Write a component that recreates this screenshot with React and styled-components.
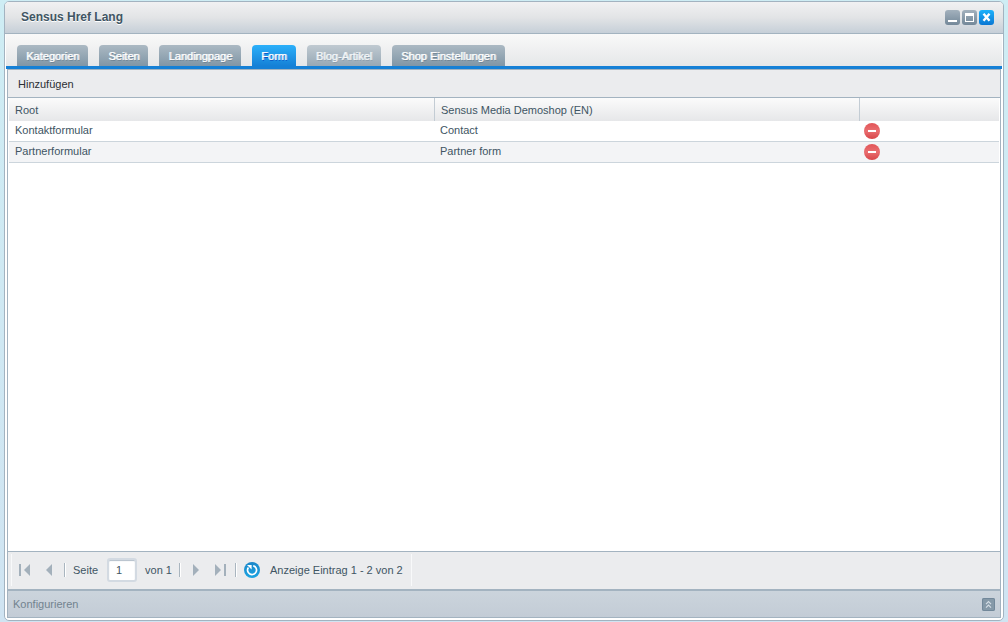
import React, { useState } from "react";
import styled, { createGlobalStyle, css } from "styled-components";

const line = "#a3b3c0";
const ink = "#405563";

const GlobalStyle = createGlobalStyle`
  *, *::before, *::after { box-sizing: border-box; }
  body {
    margin: 0;
    background: linear-gradient(#ceedf4, #d0e4f2);
    font-family: "Liberation Sans", Arial, sans-serif;
    font-size: 11px;
    line-height: 14px;
    color: ${ink};
  }
  button, input { font: inherit; color: inherit; }
  button { padding: 0; border: 0; background: none; cursor: pointer; }
  svg { display: block; }
`;

const Desktop = styled.div`
  display: flex;
  height: 100vh;
  padding: 1px 4px;
`;

const Window = styled.main`
  flex: 1;
  min-width: 0;
  display: flex;
  flex-direction: column;
  border: 1px solid ${line};
  border-radius: 5px;
  background: #fff;
  overflow: hidden;
`;

const TitleBar = styled.header`
  display: flex;
  align-items: center;
  justify-content: space-between;
  height: 32px;
  padding: 0 9px 0 16px;
  border-bottom: 1px solid ${line};
  background: linear-gradient(#f1f1f2, #e2e4e6 50%, #c6cfd8);
`;

const Title = styled.h1`
  margin: 0;
  padding-bottom: 2px;
  font-size: 12px;
  line-height: 16px;
  font-weight: bold;
  text-shadow: 0 1px 0 #fff;
`;

const WindowTools = styled.div`
  display: flex;
  gap: 2px;
`;

const ToolButton = styled.button`
  width: 15px;
  height: 15px;
  border-radius: 3px;
  background: ${(p) =>
    p.$primary
      ? "linear-gradient(#1db2fb, #0a77d3)"
      : "linear-gradient(#a3b1bd, #738899)"};
`;

const TabBar = styled.nav`
  display: flex;
  align-items: flex-end;
  gap: 11px;
  height: 35px;
  margin: 0 1px;
  padding: 0 11px;
  border-bottom: 3px solid #1580d6;
  background: linear-gradient(#f9f9f9, #e5e7e9);
`;

const Tab = styled.button`
  height: 21px;
  padding: 1px 9px 0;
  border-radius: 4px 4px 0 0;
  white-space: nowrap;
  color: #fff;
  text-shadow: 1px 0 0 rgba(255, 255, 255, 0.8), 1px 1px 0 #6f8494;
  background: linear-gradient(#abb9c3, #8096a6);
  ${(p) => p.$muted && css`
    color: #f3f6f8;
    text-shadow: 1px 0 0 rgba(243, 246, 248, 0.8), 1px 1px 0 #8a9cab;
    background: linear-gradient(#c0cad1, #97a8b5);
  `}
  ${(p) => p.$active && css`
    text-shadow: 1px 0 0 rgba(255, 255, 255, 0.8), 1px 1px 0 #0a50c0;
    background: linear-gradient(#2bb0fa, #1580d6);
  `}
`;

const Panel = styled.section`
  flex: 1;
  min-height: 0;
  display: flex;
  flex-direction: column;
  margin: 0 2px 2px;
  border: 1px solid ${line};
`;

const Toolbar = styled.div`
  display: flex;
  align-items: center;
  height: 28px;
  padding: 0 10px;
  border-bottom: 1px solid ${line};
  background: #ebecee;
`;

const AddButton = styled.button`
  color: #2b2f33;
`;

const GridArea = styled.div`
  flex: 1;
  min-height: 0;
  padding: 0 1px;
  overflow: auto;
`;

const Grid = styled.table`
  width: 100%;
  table-layout: fixed;
  border-collapse: separate;
  border-spacing: 0;
`;

const ActionCol = styled.col`
  width: 140px;
`;

const HeadCell = styled.th`
  height: 23px;
  padding: 1px 6px 0;
  text-align: left;
  font-weight: normal;
  background: linear-gradient(#fbfbfb, #e6e7e9);
  & + & {
    border-left: 1px solid #c3ccd4;
  }
`;

const Row = styled.tr`
  background: ${(p) => (p.$striped ? "#f3f4f6" : "#fff")};
`;

const Cell = styled.td`
  height: 21px;
  padding: 0 6px 2px;
  border-bottom: 1px solid #ccd5dc;
`;

const ActionCell = styled(Cell)`
  padding: 0 5px;
`;

const RemoveButton = styled.button`
  display: block;
  width: 16px;
  height: 16px;
`;

const Pager = styled.div`
  display: flex;
  height: 38px;
  border-top: 1px solid ${line};
  background: #ebecee;
`;

const PagerGroup = styled.div`
  display: flex;
  align-items: center;
  margin: 2px 0 3px 3px;
  padding: 0 8px 0 5px;
  border: solid #f8f9fa;
  border-width: 0 1px;
`;

const PagerButton = styled.button`
  display: grid;
  place-items: center;
  width: 16px;
  height: 16px;
  & + & {
    margin-left: 8px;
  }
`;

const Separator = styled.span`
  width: 2px;
  height: 14px;
  margin: 0 7px;
  border-left: 1px solid #a9b5bf;
  border-right: 1px solid #fff;
`;

const PageLabel = styled.label`
  display: flex;
  align-items: center;
`;

const PageInput = styled.input`
  width: 30px;
  height: 24px;
  margin: 0 8px 0 9px;
  padding: 0 7px;
  border: 2px solid #d3dae2;
  border-radius: 3px;
  background: #fff;
  box-shadow: inset 0 1px 1px #b4bfca;
  outline: none;
`;

const Status = styled.span`
  margin-left: 10px;
  white-space: nowrap;
`;

const ConfigBar = styled.footer`
  display: flex;
  align-items: center;
  justify-content: space-between;
  height: 28px;
  padding: 0 5px;
  border-top: 2px solid ${line};
  background: linear-gradient(#cbd4dc, #c3ccd6);
  color: #72838f;
`;

const ExpandButton = styled.button`
  width: 13px;
  height: 13px;
  border-radius: 2px;
  background: #8599a8;
  box-shadow: inset 0 0 0 1px #72889a;
`;

const MinimizeIcon = () => (
  <svg width="15" height="15" viewBox="0 0 15 15" aria-hidden="true">
    <rect x="3" y="10" width="9" height="2" fill="#fff" />
  </svg>
);

const MaximizeIcon = () => (
  <svg width="15" height="15" viewBox="0 0 15 15" aria-hidden="true">
    <path fill="#fff" fillRule="evenodd" d="M3 3h9v9H3zM4 6v5h7V6z" />
  </svg>
);

const CloseIcon = () => (
  <svg width="15" height="15" viewBox="0 0 15 15" aria-hidden="true">
    <path d="M4.5 3.8l6 7M10.5 3.8l-6 7" stroke="#fff" strokeWidth="2.4" />
  </svg>
);

const MinusIcon = () => (
  <svg width="16" height="16" viewBox="0 0 16 16" aria-hidden="true">
    <defs>
      <linearGradient id="minus-fill" x2="0" y2="1">
        <stop offset="0" stopColor="#e25558" />
        <stop offset=".5" stopColor="#e96e70" />
        <stop offset="1" stopColor="#d84548" />
      </linearGradient>
    </defs>
    <circle cx="8" cy="8" r="8" fill="url(#minus-fill)" />
    <rect x="4" y="7" width="8" height="2" fill="#fff" />
  </svg>
);

const PageIcon = ({ forward, edge }) => (
  <svg width="16" height="16" viewBox="0 0 16 16" aria-hidden="true">
    <g fill="#a3b0bb" transform={forward ? "matrix(-1 0 0 1 16 0)" : undefined}>
      {edge && <rect x="2" y="2" width="2" height="12" />}
      <path d={edge ? "M13 2v12L7 8z" : "M11 2v12L5 8z"} />
    </g>
  </svg>
);

const RefreshIcon = () => (
  <svg width="16" height="16" viewBox="0 0 16 16" aria-hidden="true">
    <defs>
      <linearGradient id="refresh-fill" x2="0" y2="1">
        <stop offset="0" stopColor="#1d87c9" />
        <stop offset="1" stopColor="#1ba4e2" />
      </linearGradient>
    </defs>
    <circle cx="8" cy="8" r="8" fill="url(#refresh-fill)" />
    <path d="M9.2 3.7A4.5 4.5 0 1 1 4.4 5.4" fill="none" stroke="#fff" strokeWidth="1.7" />
    <path d="M3 3h4.6v4.6z" fill="#fff" />
  </svg>
);

const ExpandIcon = () => (
  <svg width="13" height="13" viewBox="0 0 13 13" aria-hidden="true">
    <path d="M4 6.2l2.5-2.5L9 6.2M4 9.7l2.5-2.5L9 9.7" fill="none" stroke="#d5dee6" strokeWidth="1.2" />
  </svg>
);

const tabs = [
  { name: "Kategorien" },
  { name: "Seiten" },
  { name: "Landingpage" },
  { name: "Form" },
  { name: "Blog-Artikel", muted: true },
  { name: "Shop Einstellungen" },
];

const forms = [
  { root: "Kontaktformular", shop: "Contact" },
  { root: "Partnerformular", shop: "Partner form" },
];

export default function App() {
  const [active, setActive] = useState("Form");
  const [page, setPage] = useState("1");

  return (
    <>
      <GlobalStyle />
      <Desktop>
        <Window>
          <TitleBar>
            <Title>Sensus Href Lang</Title>
            <WindowTools>
              <ToolButton aria-label="Minimieren"><MinimizeIcon /></ToolButton>
              <ToolButton aria-label="Maximieren"><MaximizeIcon /></ToolButton>
              <ToolButton $primary aria-label="Schließen"><CloseIcon /></ToolButton>
            </WindowTools>
          </TitleBar>
          <TabBar>
            {tabs.map(({ name, muted }) => (
              <Tab
                key={name}
                $muted={muted}
                $active={name === active}
                aria-pressed={name === active}
                onClick={() => setActive(name)}
              >
                {name}
              </Tab>
            ))}
          </TabBar>
          <Panel>
            <Toolbar>
              <AddButton>Hinzufügen</AddButton>
            </Toolbar>
            <GridArea>
              <Grid>
                <colgroup>
                  <col />
                  <col />
                  <ActionCol />
                </colgroup>
                <thead>
                  <tr>
                    <HeadCell>Root</HeadCell>
                    <HeadCell>Sensus Media Demoshop (EN)</HeadCell>
                    <HeadCell aria-label="Aktionen" />
                  </tr>
                </thead>
                <tbody>
                  {forms.map((form, i) => (
                    <Row key={form.root} $striped={i % 2 === 1}>
                      <Cell>{form.root}</Cell>
                      <Cell>{form.shop}</Cell>
                      <ActionCell>
                        <RemoveButton aria-label={`${form.root} löschen`}>
                          <MinusIcon />
                        </RemoveButton>
                      </ActionCell>
                    </Row>
                  ))}
                </tbody>
              </Grid>
            </GridArea>
            <Pager>
              <PagerGroup>
                <PagerButton aria-label="Erste Seite"><PageIcon edge /></PagerButton>
                <PagerButton aria-label="Vorherige Seite"><PageIcon /></PagerButton>
                <Separator />
                <PageLabel>
                  Seite
                  <PageInput value={page} onChange={(e) => setPage(e.target.value)} />
                  von 1
                </PageLabel>
                <Separator />
                <PagerButton aria-label="Nächste Seite"><PageIcon forward /></PagerButton>
                <PagerButton aria-label="Letzte Seite"><PageIcon forward edge /></PagerButton>
                <Separator />
                <PagerButton aria-label="Aktualisieren"><RefreshIcon /></PagerButton>
                <Status>Anzeige Eintrag 1 - 2 von 2</Status>
              </PagerGroup>
            </Pager>
            <ConfigBar>
              Konfigurieren
              <ExpandButton aria-label="Konfigurieren aufklappen"><ExpandIcon /></ExpandButton>
            </ConfigBar>
          </Panel>
        </Window>
      </Desktop>
    </>
  );
}
